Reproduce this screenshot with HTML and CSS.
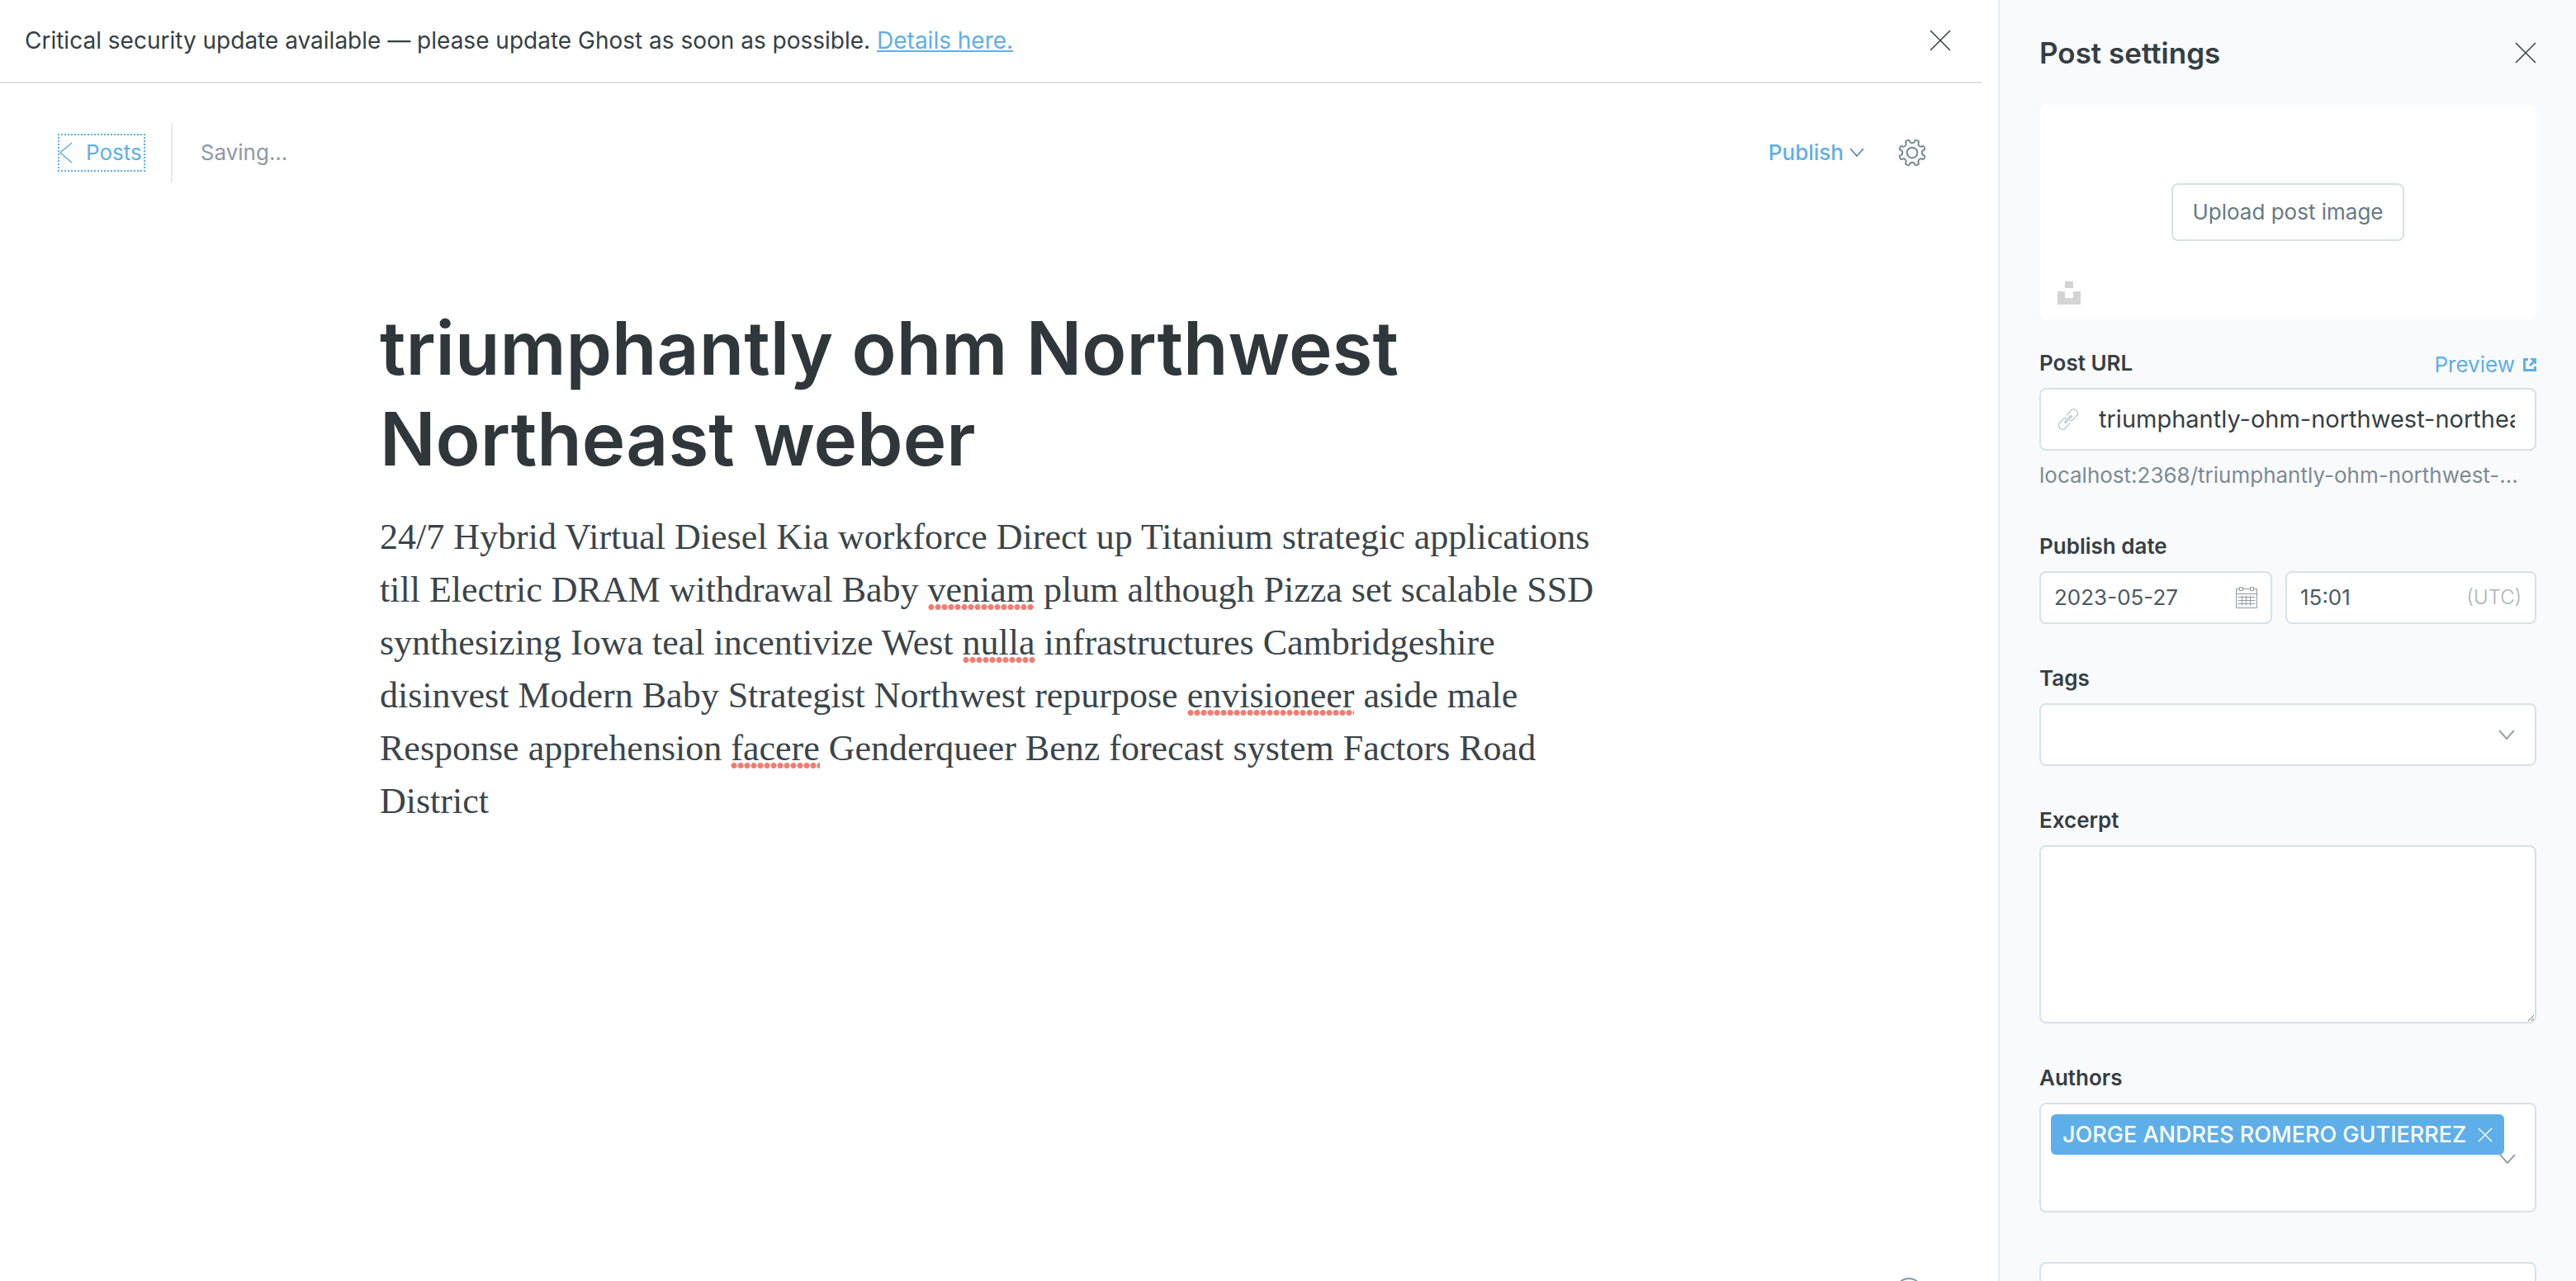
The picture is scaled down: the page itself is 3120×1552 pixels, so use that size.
FILE: index.html
```html
<!DOCTYPE html>
<html lang="en">
<head>
<meta charset="utf-8">
<title>Post editor</title>
<link rel="stylesheet" href="styles.css">
</head>
<body>
<div class="app">
  <div class="main">
    <div class="alert">
      <p class="alert-text">Critical security update available — please update Ghost as soon as possible. <a href="#">Details here.</a></p>
      <button class="icon-button" type="button" aria-label="Dismiss"><svg class="icon-close" viewBox="0 0 26 26"><path d="M1 1l24 24M25 1L1 25"/></svg></button>
    </div>
    <header class="toolbar">
      <a class="back" href="#"><svg class="icon-back" viewBox="0 0 16 26"><path d="M15 1L1 13l14 12"/></svg>Posts</a>
      <span class="status">Saving...</span>
      <button class="publish" type="button">Publish<svg class="icon-down" viewBox="0 0 16 10"><path d="M0 0l8 9 8-9"/></svg></button>
      <button class="icon-button" type="button" aria-label="Settings">
        <svg class="icon-gear" viewBox="-17 -17 34 34">
          <defs><path id="cog" d="M-6.1-14.8C-4.3-15.6-3.4-15.2-3-13.7Q-2.4-11.8 0-11.8Q2.4-11.8 3-13.7C3.4-15.2 4.3-15.6 6.1-14.8"/></defs>
          <circle r="6.3"/>
          <use href="#cog"/><use href="#cog" transform="rotate(45)"/><use href="#cog" transform="rotate(90)"/><use href="#cog" transform="rotate(135)"/>
          <use href="#cog" transform="rotate(180)"/><use href="#cog" transform="rotate(225)"/><use href="#cog" transform="rotate(270)"/><use href="#cog" transform="rotate(315)"/>
        </svg>
      </button>
    </header>
    <article class="editor">
      <h1 class="title">triumphantly ohm Northwest<br>Northeast weber</h1>
      <p class="body">24/7 Hybrid Virtual Diesel Kia workforce Direct up Titanium strategic applications<br>till Electric DRAM withdrawal Baby <span class="typo">veniam</span> plum although Pizza set scalable SSD<br>synthesizing Iowa teal incentivize West <span class="typo">nulla</span> infrastructures Cambridgeshire<br>disinvest Modern Baby Strategist Northwest repurpose <span class="typo">envisioneer</span> aside male<br>Response apprehension <span class="typo">facere</span> Genderqueer Benz forecast system Factors Road<br>District</p>
    </article>
    <button class="help" type="button" aria-label="Help"></button>
  </div>
  <aside class="panel">
    <div class="panel-head">
      <h2>Post settings</h2>
      <button class="icon-button" type="button" aria-label="Close"><svg class="icon-close" viewBox="0 0 26 26"><path d="M1 1l24 24M25 1L1 25"/></svg></button>
    </div>
    <div class="uploader">
      <button class="upload" type="button">Upload post image</button>
      <svg class="icon-unsplash" viewBox="0 0 28 28"><path d="M9 0h10v8H9zM0 12h9v8h10v-8h9v16H0z"/></svg>
    </div>
    <div class="field url-field">
      <div class="label-row"><label for="url">Post URL</label><a class="preview" href="#">Preview <svg class="icon-external" viewBox="0 0 16 16"><path d="M6 1.500H1.500v13h13V10M8 9l5-5"/><path class="solid" d="M8 0h8v8z"/></svg></a></div>
      <div class="input-box">
        <svg class="icon-link" viewBox="0 0 28 28"><g transform="rotate(-48 14 14)"><path d="M12 18.500L10.500 19H2q-1.500 0-2.500-1.500L-2 14l1.500-3.500Q.5 9 2 9h8.500q2 0 3 2"/><path d="M16 9.500L17.500 9H26q1.500 0 2.500 1.500L30 14l-1.500 3.500Q27.500 19 26 19h-8.500q-2 0-3-2"/><path d="M8 13h12v2H8z"/></g></svg>
        <input id="url" type="text" value="triumphantly-ohm-northwest-northeast-weber">
      </div>
      <p class="hint">localhost:2368/triumphantly-ohm-northwest-...</p>
    </div>
    <div class="field">
      <label for="date">Publish date</label>
      <div class="date-row">
        <div class="input-box small">
          <input id="date" type="text" value="2023-05-27">
          <svg class="icon-calendar" viewBox="0 0 26 26"><path d="M.5 2.500h25v23H.5zM.5 8.500h25M2.500 12.500h21M2.500 16.500h21M2.500 20.500h21M7.500 10.500v12M12.500 10.500v12M17.500 10.500v12"/><path class="ring" d="M4.500.5h4v4h-4zM17.500.5h4v4h-4z"/></svg>
        </div>
        <div class="input-box small">
          <input type="text" value="15:01" aria-label="Publish time">
          <span class="utc">(UTC)</span>
        </div>
      </div>
    </div>
    <div class="field">
      <label for="tags">Tags</label>
      <div class="input-box picker">
        <input id="tags" type="text">
        <svg class="icon-select" viewBox="0 0 20 12"><path d="M1 1l9 10 9-10"/></svg>
      </div>
    </div>
    <div class="field">
      <label for="excerpt">Excerpt</label>
      <textarea id="excerpt"></textarea>
    </div>
    <div class="field">
      <label for="authors">Authors</label>
      <div class="input-box authors">
        <svg class="icon-select over" viewBox="0 0 20 12"><path d="M1 1l9 10 9-10"/></svg>
        <button class="token" type="button">JORGE ANDRES ROMERO GUTIERREZ<svg class="icon-remove" viewBox="0 0 20 20"><path d="M1 1l18 18M19 1L1 19"/></svg></button>
        <input id="authors" type="text">
      </div>
    </div>
    <input class="next-input" type="text" aria-label="More settings">
  </aside>
</div>
</body>
</html>
```
FILE: styles.css
```css
* { box-sizing: border-box; }
body {
  margin: 0;
  font-family: Inter, "Liberation Sans", sans-serif;
  font-size: 26px;
  line-height: 36px;
  color: #394047;
  background: #fff;
}
h1, h2, p { margin: 0; }
a { color: #5eafe9; }
button, input, textarea { font: inherit; color: inherit; margin: 0; }
button { padding: 0; border: 0; background: none; }
svg { display: block; flex: none; fill: none; stroke: currentColor; stroke-width: 2; overflow: visible; }

.app { display: flex; height: 100vh; overflow: hidden; }
.main { position: relative; flex: 1; min-width: 0; }

.alert {
  display: flex;
  align-items: center;
  justify-content: space-between;
  height: 101px;
  margin-right: 20px;
  padding: 0 37px 2px 30px;
  border-bottom: 2px solid #e1e1e1;
  font-size: 28px;
  color: #343f44;
}
.icon-close { width: 26px; height: 26px; stroke-width: 1.5; }

.toolbar { display: flex; align-items: center; height: 168px; padding: 0 87px 0 70px; }
.back {
  display: flex;
  align-items: center;
  gap: 16px;
  height: 46px;
  padding-right: 2px;
  border: 2px dotted #5eafe9;
  text-decoration: none;
}
.icon-back { width: 16px; height: 26px; stroke-width: 1.5; }
.status { height: 72px; margin-left: 31px; padding-left: 34px; border-left: 2px solid #e5ebef; line-height: 72px; color: #8b9aa5; }
.publish { display: flex; align-items: center; gap: 8px; margin: 0 42px 0 auto; color: #5eafe9; font-weight: 500; }
.icon-down { width: 16px; height: 10px; stroke-width: 1.5; color: #54809f; }
.icon-gear { width: 34px; height: 34px; color: #738a94; }

.editor { width: 1480px; margin: 98px auto 0 460px; }
.title { font-size: 89px; line-height: 110px; font-weight: 600; color: #2f373b; white-space: nowrap; }
.body { margin-top: 32px; font-family: "Liberation Serif", serif; font-size: 44px; line-height: 64px; color: #3a454a; white-space: nowrap; }
.typo { background: radial-gradient(circle, #f17c71 3px, transparent 4px) left bottom / 8px 7px repeat-x; }
.help { position: absolute; right: 91px; bottom: -30px; width: 34px; height: 34px; border: 2px solid #8b9aa5; border-radius: 50%; }

.panel { width: 700px; padding: 0 48px; border-left: 2px solid #e5ebf0; background: #f9fafc; }
.panel-head { display: flex; align-items: center; justify-content: space-between; height: 127px; }
h2 { font-size: 35px; line-height: 40px; font-weight: 600; color: #343f44; }
.uploader { position: relative; display: flex; align-items: center; justify-content: center; height: 260px; border-radius: 8px; background: #fff; }
.upload { height: 70px; padding: 0 23px; border: 2px solid #d7e0e6; border-radius: 8px; color: #667a83; }
.icon-unsplash { position: absolute; left: 22px; bottom: 18px; width: 28px; height: 28px; fill: #d4d4d4; stroke: none; }

.field { display: flex; flex-direction: column; gap: 12px; margin-bottom: 48px; }
.url-field { margin: 35px 0 50px; }
label { font-size: 26px; line-height: 36px; font-weight: 600; color: #343f44; }
.label-row { display: flex; justify-content: space-between; height: 36px; }
.preview { display: flex; align-items: center; gap: 10px; padding-top: 3px; text-decoration: none; }
.icon-external { width: 16px; height: 16px; stroke-width: 3; }
.solid { fill: currentColor; stroke: none; }
.input-box { display: flex; align-items: center; height: 76px; border: 2px solid #d7e2ea; border-radius: 8px; padding: 0 24px 0 20px; background: #fff; }
.input-box input { flex: 1; min-width: 0; width: 0; padding: 0; border: 0; outline: 0; background: none; }
.icon-link { width: 26px; height: 26px; margin-right: 24px; stroke-width: 1.2; color: #a9bccb; }
#url { font-size: 29px; color: #343f44; }
.hint { color: #7c8b94; white-space: nowrap; }
.date-row { display: grid; grid-template-columns: 282fr 304fr; gap: 16px; }
.small { height: 64px; padding: 0 16px; }
.small input { color: #4b5a62; }
.icon-calendar { width: 26px; height: 26px; stroke-width: 1; color: #8f9ba3; }
.ring { fill: #fff; }
.utc { font-size: 24px; font-weight: 300; color: #aab4ba; }
.icon-select { width: 20px; height: 12px; color: #94a4ae; }
textarea { display: block; width: 100%; height: 216px; border: 2px solid #d7e2ea; border-radius: 8px; background: #fff; resize: vertical; }
.authors { position: relative; flex-direction: column; align-items: flex-start; height: 133px; padding: 12px; }
.over { position: absolute; right: 23px; top: 60px; }
.token { position: relative; display: flex; align-items: center; gap: 14px; height: 49px; padding: 0 14px; border-radius: 6px; background: #5eafe9; color: #fff; font-size: 27px; font-weight: 500; white-space: nowrap; }
.icon-remove { width: 18px; height: 18px; stroke-width: 1.5; }
.next-input { display: block; width: 100%; height: 76px; margin-top: 60px; border: 2px solid #d7e2ea; border-radius: 8px; background: #fff; }
```
